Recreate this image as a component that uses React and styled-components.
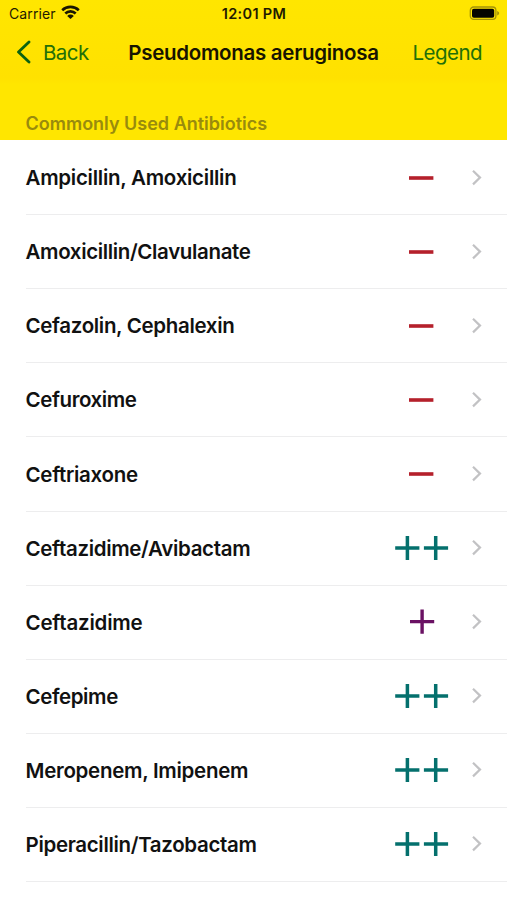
import React from "react";
import styled, { createGlobalStyle } from "styled-components";

const COLOR = {
  yellow: "#ffe600",
  yellowNav: "#ffe100",
  green: "#236f08",
  chevron: "#0c6210",
  section: "#998b0d",
  line: "#ededee",
  arrow: "#c2c2c4",
  resistant: "#b5202b",
  variable: "#6a1163",
  active: "#04706d",
};

const antibiotics = [
  { name: "Ampicillin, Amoxicillin", rating: "minus", tracking: -0.27 },
  { name: "Amoxicillin/Clavulanate", rating: "minus", tracking: -0.36 },
  { name: "Cefazolin, Cephalexin", rating: "minus", tracking: -0.33 },
  { name: "Cefuroxime", rating: "minus", tracking: -0.4 },
  { name: "Ceftriaxone", rating: "minus", tracking: -0.3 },
  { name: "Ceftazidime/Avibactam", rating: "double", tracking: -0.33 },
  { name: "Ceftazidime", rating: "plus", tracking: -0.2 },
  { name: "Cefepime", rating: "double", tracking: -0.4 },
  { name: "Meropenem, Imipenem", rating: "double", tracking: -0.28 },
  { name: "Piperacillin/Tazobactam", rating: "double", tracking: -0.33 },
];

function Rating({ type }) {
  if (type === "minus") {
    return (
      <svg width="54" height="28" viewBox="0 0 54 28" fill="none">
        <path d="M14 14h24.4" stroke={COLOR.resistant} strokeWidth="3.6" />
      </svg>
    );
  }
  if (type === "plus") {
    return (
      <svg width="54" height="28" viewBox="0 0 54 28" fill="none">
        <path
          d="M15 13.6h24.2M27.1 1.6v24.2"
          stroke={COLOR.variable}
          strokeWidth="3.4"
        />
      </svg>
    );
  }
  return (
    <svg width="54" height="28" viewBox="0 0 54 28" fill="none">
      <path
        d="M.2 14h24.2M12.4 1.9v24.2M28.9 14h24.2M40.7 1.9v24.2"
        stroke={COLOR.active}
        strokeWidth="3.5"
      />
    </svg>
  );
}

export default function App() {
  return (
    <Screen>
      <GlobalStyle />
      <Header>
        <StatusBar>
          <Carrier>
            Carrier
            <svg width="19" height="15" viewBox="0 0 19 15">
              <g fill="none" stroke="#1a1700" strokeWidth="2.6">
                <path d="M1.2 5.2a12 12 0 0 1 16.6 0" />
                <path d="M4.3 8.5a7.4 7.4 0 0 1 10.4 0" />
              </g>
              <path d="M6.2 10.9a4.7 4.7 0 0 1 6.6 0L9.5 14z" fill="#1a1700" />
            </svg>
          </Carrier>
          <Clock>12:01 PM</Clock>
          <Battery>
            <svg width="31" height="15" viewBox="0 0 31 15">
              <rect
                x="1.3"
                y="1"
                width="25.6"
                height="12.4"
                rx="3.4"
                fill="none"
                stroke="#a49408"
                strokeWidth="1.3"
              />
              <rect x="3" y="2.7" width="22.2" height="9" rx="1.8" fill="#050500" />
              <path d="M28.2 5c2.6.8 2.6 3.6 0 4.4z" fill="#a49408" />
            </svg>
          </Battery>
        </StatusBar>
        <NavBar>
          <BackButton>
            <svg width="15" height="24" viewBox="0 0 15 24" fill="none">
              <path
                d="M13 1.9 2.5 12 13 22.1"
                stroke={COLOR.chevron}
                strokeWidth="2.8"
                strokeLinecap="round"
                strokeLinejoin="round"
              />
            </svg>
            <span>Back</span>
          </BackButton>
          <Title>Pseudomonas aeruginosa</Title>
          <LegendButton>Legend</LegendButton>
        </NavBar>
        <SectionTitle>
          <span>Commonly Used Antibiotics</span>
        </SectionTitle>
      </Header>
      <List>
        {antibiotics.map(({ name, rating, tracking }) => (
          <Row key={name}>
            <Name $tracking={tracking}>
              <span>{name}</span>
            </Name>
            <Rating type={rating} />
            <Arrow width="12" height="18" viewBox="0 0 12 18" fill="none">
              <path d="M2 1.8 9 8.6l-7 6.8" stroke={COLOR.arrow} strokeWidth="2.2" />
            </Arrow>
          </Row>
        ))}
      </List>
    </Screen>
  );
}

const GlobalStyle = createGlobalStyle`
  body {
    margin: 0;
    background: #fff;
    font-family: Inter, "Liberation Sans", sans-serif;
  }
  svg {
    display: block;
    flex: none;
  }
`;

const Screen = styled.main`
  width: 507px;
  height: 900px;
  overflow: hidden;
  background: #fff;
`;

const Header = styled.header`
  height: 140.4px;
  background: linear-gradient(
    ${COLOR.yellow} 0,
    ${COLOR.yellowNav} 78px,
    ${COLOR.yellow} 84px
  );
`;

const StatusBar = styled.div`
  display: grid;
  grid-template-columns: 1fr auto 1fr;
  align-items: center;
  height: 27px;
  padding: 0 7px 0 9px;
  font-size: 14px;
  color: #1f1b00;
`;

const Carrier = styled.div`
  display: flex;
  align-items: center;
  gap: 5px;
  letter-spacing: 0.1px;

  svg {
    margin-bottom: 2px;
  }
`;

const Clock = styled.div`
  margin-right: 1px;
  font-size: 14.5px;
  font-weight: 600;
  letter-spacing: 0.3px;
`;

const Battery = styled.div`
  justify-self: end;
`;

const NavBar = styled.nav`
  display: grid;
  grid-template-columns: 1fr auto 1fr;
  align-items: center;
  height: 50px;
  padding: 0 16px;
  margin-bottom: 1px;
`;

const NavButton = styled.button`
  padding: 0;
  border: none;
  background: none;
  font: inherit;
  font-size: 20.5px;
  letter-spacing: -0.55px;
  color: ${COLOR.green};
`;

const BackButton = styled(NavButton)`
  display: flex;
  align-items: center;
  gap: 12px;
`;

const LegendButton = styled(NavButton)`
  justify-self: end;
  margin-right: 9px;
`;

const Title = styled.h1`
  margin: 0;
  font-size: 20.5px;
  font-weight: 600;
  letter-spacing: -0.3px;
  color: #171400;
`;

const SectionTitle = styled.h2`
  display: flex;
  align-items: flex-end;
  height: 57px;
  margin: 0;
  padding-left: 25.5px;
  font-size: 18px;
  font-weight: 600;
  line-height: 22px;
  color: ${COLOR.section};
`;

const List = styled.ul`
  margin: 0;
  padding: 0.7px 0 0 25.5px;
  list-style: none;
`;

const Row = styled.li`
  display: flex;
  align-items: center;
  box-sizing: border-box;
  height: 74.1px;
  padding-right: 24px;
  border-bottom: 1px solid ${COLOR.line};
`;

const Name = styled.div`
  flex: 1;
  font-size: 20.5px;
  font-weight: 600;
  letter-spacing: ${({ $tracking }) => $tracking}px;
  color: #111;
`;

const Arrow = styled.svg`
  margin-left: 22px;
`;
